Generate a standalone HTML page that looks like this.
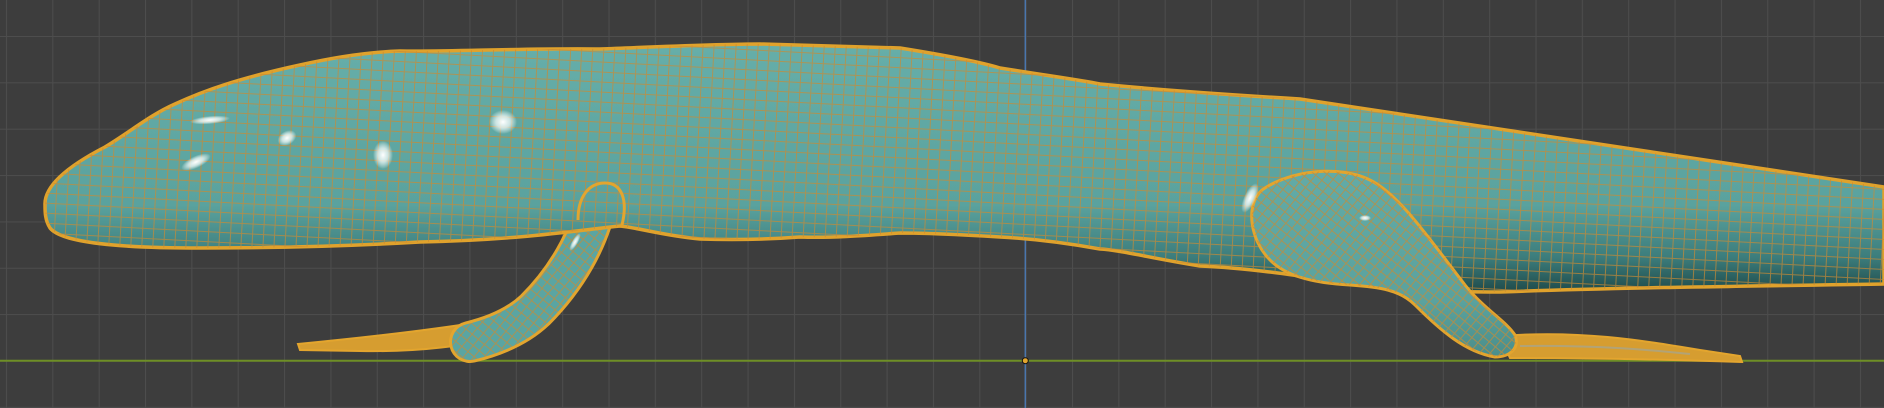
<!DOCTYPE html>
<html><head><meta charset="utf-8"><style>
html,body{margin:0;padding:0;background:#3d3d3d;overflow:hidden}
svg{display:block}
</style></head><body>
<svg width="1884" height="408" viewBox="0 0 1884 408" xmlns="http://www.w3.org/2000/svg">
<defs>
<pattern id="grid" x="52.3" y="36" width="46.35" height="46.35" patternUnits="userSpaceOnUse">
<path d="M0 0H46.35M0 0V46.35" stroke="#4d4d4d" stroke-width="2" fill="none"/>
</pattern>
<pattern id="mesh" width="11" height="10" patternUnits="userSpaceOnUse" patternTransform="rotate(3)">
<path d="M0 0.5H11M0.5 0V10" stroke="#c98a35" stroke-width="1" fill="none" opacity="0.7"/>
</pattern>
<pattern id="meshf" width="8" height="8" patternUnits="userSpaceOnUse" patternTransform="rotate(40)">
<path d="M0 0.5H8M0.5 0V8" stroke="#c98a35" stroke-width="1" fill="none" opacity="0.7"/>
</pattern>
<linearGradient id="bg" x1="0" y1="0" x2="0" y2="1">
<stop offset="0" stop-color="#66aea9"/>
<stop offset="0.65" stop-color="#5aa29e"/>
<stop offset="0.86" stop-color="#3c7d7c"/>
<stop offset="1" stop-color="#1f4b4b"/>
</linearGradient>
<linearGradient id="lg" x1="0" y1="0" x2="0" y2="1">
<stop offset="0" stop-color="#62aba7"/>
<stop offset="0.7" stop-color="#5aa29e"/>
<stop offset="1" stop-color="#4a8e8b"/>
</linearGradient>
<radialGradient id="hl"><stop offset="0" stop-color="#fff"/><stop offset="0.5" stop-color="#e8f4f3" stop-opacity="0.8"/><stop offset="1" stop-color="#fff" stop-opacity="0"/></radialGradient>
</defs>
<rect width="1884" height="408" fill="#3d3d3d"/>
<rect width="1884" height="408" fill="url(#grid)"/>
<line x1="1025.3" y1="0" x2="1025.3" y2="408" stroke="#4a76ad" stroke-width="1.5"/>
<line x1="0" y1="360.7" x2="1884" y2="360.7" stroke="#6e8f26" stroke-width="2"/>

<path d="M298,344 C360,338 430,330 480,322 L500,335 C470,346 420,352 360,351 L300,350 Z" fill="#d69d30" stroke="#e3a52e" stroke-width="2"/>
<path d="M598,195 C590,240 565,280 535,310 C518,326 495,336 470,342" fill="none" stroke="#e3a52e" stroke-width="42" stroke-linecap="round"/>
<path d="M598,195 C590,240 565,280 535,310 C518,326 495,336 470,342" fill="none" stroke="#5aa5a2" stroke-width="36" stroke-linecap="round"/>
<path d="M598,195 C590,240 565,280 535,310 C518,326 495,336 470,342" fill="none" stroke="url(#meshf)" stroke-width="36" stroke-linecap="round"/>

<path d="M1500,336 C1580,330 1640,340 1700,350 L1740,356 L1742,362 C1680,360 1600,358 1510,358 Z" fill="#d69d30" stroke="#e3a52e" stroke-width="2"/>
<path d="M1520,346 C1600,345 1650,350 1690,354" stroke="#9aa6a5" stroke-width="2" fill="none" opacity="0.6"/>

<path d="M45,205 C44,185 70,165 105,147 C130,132 150,115 175,104 C205,90 240,78 300,65 C340,56 370,52 400,51 C450,52 520,48 600,49 C680,46 720,44 760,44 L900,48 C950,56 980,62 1000,68 C1050,76 1080,80 1100,84 C1160,90 1250,96 1300,99 C1500,130 1700,160 1884,187 L1884,284 C1750,286 1600,288 1500,292 C1440,292 1400,290 1340,282 C1300,276 1250,268 1200,266 C1150,258 1120,250 1100,249 C1050,240 1020,238 1000,237 C950,234 920,233 900,233 C860,236 830,238 800,237 C760,240 730,240 700,239 C660,235 640,228 620,226 C580,230 520,240 420,242 C350,246 280,248 200,248 C120,248 62,243 50,228 C45,220 45,212 45,205 Z" fill="url(#bg)" stroke="#e0a22c" stroke-width="3.5"/>
<path d="M45,205 C44,185 70,165 105,147 C130,132 150,115 175,104 C205,90 240,78 300,65 C340,56 370,52 400,51 C450,52 520,48 600,49 C680,46 720,44 760,44 L900,48 C950,56 980,62 1000,68 C1050,76 1080,80 1100,84 C1160,90 1250,96 1300,99 C1500,130 1700,160 1884,187 L1884,284 C1750,286 1600,288 1500,292 C1440,292 1400,290 1340,282 C1300,276 1250,268 1200,266 C1150,258 1120,250 1100,249 C1050,240 1020,238 1000,237 C950,234 920,233 900,233 C860,236 830,238 800,237 C760,240 730,240 700,239 C660,235 640,228 620,226 C580,230 520,240 420,242 C350,246 280,248 200,248 C120,248 62,243 50,228 C45,220 45,212 45,205 Z" fill="url(#mesh)"/>

<path d="M578,220 C578,195 590,183 605,183 C622,183 628,200 622,225" fill="none" stroke="#e3a52e" stroke-width="3"/>

<path d="M1262,190 C1290,170 1340,165 1370,180 C1400,195 1430,240 1465,285 C1485,310 1505,320 1515,335 C1520,348 1510,357 1495,357 C1465,352 1440,330 1415,305 C1400,290 1380,287 1350,285 C1310,283 1285,275 1270,260 C1250,240 1245,205 1262,190 Z" fill="url(#lg)" stroke="#e3a52e" stroke-width="3"/>
<path d="M1262,190 C1290,170 1340,165 1370,180 C1400,195 1430,240 1465,285 C1485,310 1505,320 1515,335 C1520,348 1510,357 1495,357 C1465,352 1440,330 1415,305 C1400,290 1380,287 1350,285 C1310,283 1285,275 1270,260 C1250,240 1245,205 1262,190 Z" fill="url(#meshf)"/>

<ellipse cx="210" cy="120" rx="20" ry="4" fill="url(#hl)" transform="rotate(-5 210 120)"/>
<ellipse cx="196" cy="162" rx="16" ry="6" fill="url(#hl)" transform="rotate(-25 196 162)"/>
<ellipse cx="287" cy="138" rx="10" ry="7" fill="url(#hl)" transform="rotate(-30 287 138)"/>
<ellipse cx="383" cy="155" rx="10" ry="14" fill="url(#hl)"/>
<ellipse cx="503" cy="122" rx="14" ry="12" fill="url(#hl)"/>
<ellipse cx="1250" cy="198" rx="6" ry="16" fill="url(#hl)" transform="rotate(25 1250 198)"/>
<ellipse cx="1365" cy="218" rx="6" ry="3" fill="url(#hl)"/>
<ellipse cx="575" cy="242" rx="3" ry="10" fill="url(#hl)" transform="rotate(30 575 242)"/>
<circle cx="1025.3" cy="360.7" r="3" fill="#e3a52e" stroke="#111" stroke-width="1"/>
</svg>
</body></html>
